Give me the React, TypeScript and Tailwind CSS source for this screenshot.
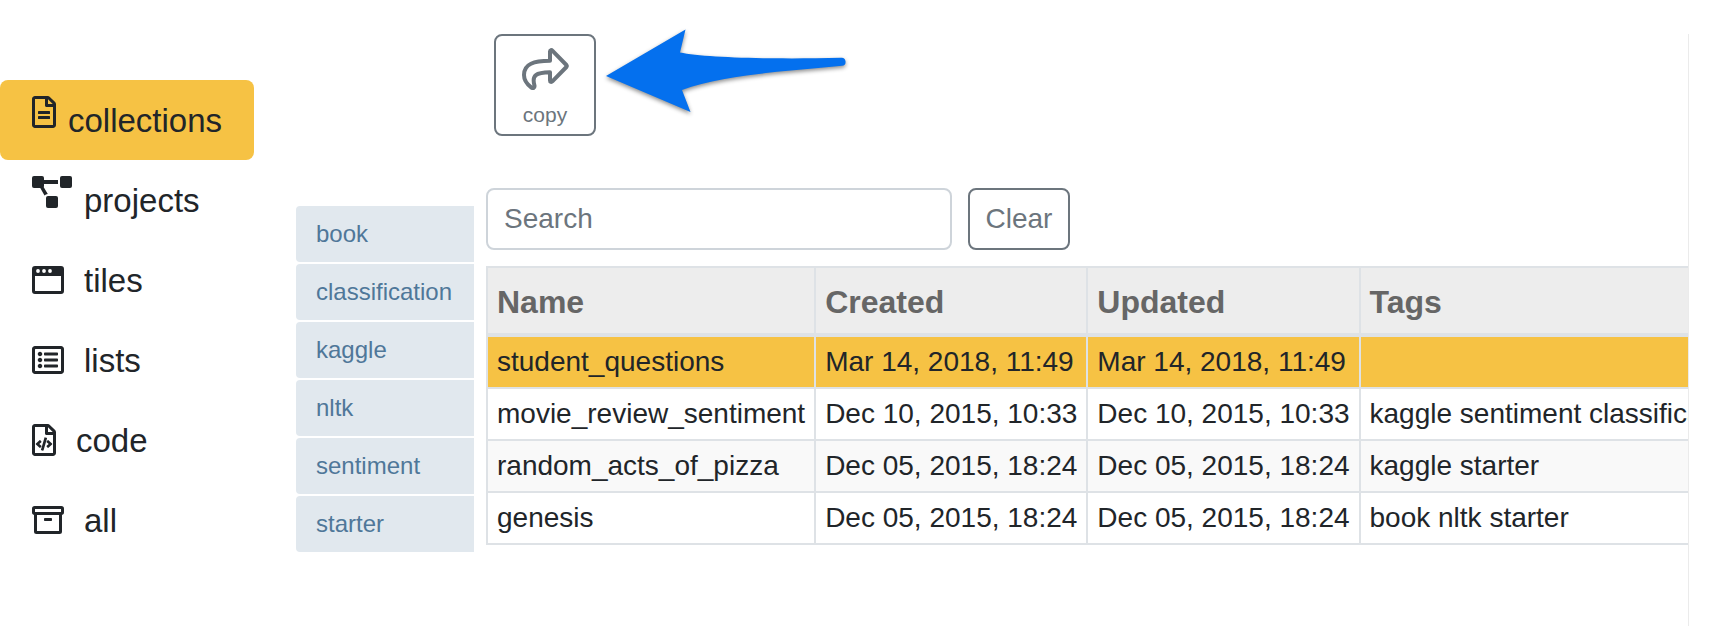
import React, { useState } from "react";
import { FaRegFileCode, FaRegListAlt } from "react-icons/fa";

function DocumentIcon() {
  return (
    <svg className="h-8 w-6" viewBox="0 0 384 512" fill="currentColor" aria-hidden="true">
      <path d="M369.9 97.9L286 14C277 5 264.8 0 252.1 0H48C21.5 0 0 21.5 0 48v416c0 26.5 21.5 48 48 48h288c26.5 0 48-21.5 48-48V131.9c0-12.7-5.1-25-14.1-34zM332.1 128H256V51.9l76.1 76.1zM48 464V48h160v104c0 13.3 10.7 24 24 24h104v288H48z" />
      <rect x="96" y="240" width="192" height="48" rx="10" />
      <rect x="96" y="320" width="192" height="48" rx="10" />
    </svg>
  );
}

function DiagramIcon() {
  return (
    <svg className="h-8 w-10" viewBox="0 0 40 32" fill="currentColor" aria-hidden="true">
      <rect x="0" y="0" width="12" height="12" rx="2" />
      <rect x="28" y="0" width="12" height="12" rx="2" />
      <rect x="14" y="20" width="12" height="12" rx="2" />
      <path d="M11 4H26V8H11zM8 11.5L11 10L15.8 18C14.4 18.2 13.3 18.8 12.5 19.6z" />
    </svg>
  );
}

function WindowIcon() {
  return (
    <svg className="h-8 w-8" viewBox="0 0 32 32" fill="currentColor" aria-hidden="true">
      <path
        fillRule="evenodd"
        d="M3 2H29A3 3 0 0 1 32 5V27A3 3 0 0 1 29 30H3A3 3 0 0 1 0 27V5A3 3 0 0 1 3 2zM3 12V26.4Q3 27 3.6 27H28.4Q29 27 29 26.4V12zM6 5.1a1.9 1.9 0 1 0 0 3.8a1.9 1.9 0 1 0 0-3.8zM12 5.1a1.9 1.9 0 1 0 0 3.8a1.9 1.9 0 1 0 0-3.8zM18 5.1a1.9 1.9 0 1 0 0 3.8a1.9 1.9 0 1 0 0-3.8z"
      />
    </svg>
  );
}

function ArchiveIcon() {
  return (
    <svg className="h-8 w-8" viewBox="0 0 32 32" fill="none" stroke="currentColor" strokeWidth="3" aria-hidden="true">
      <rect x="1.5" y="3.5" width="29" height="6" rx="1.2" />
      <path d="M3.5 9.5V27.5Q3.5 28.5 4.5 28.5H27.5Q28.5 28.5 28.5 27.5V9.5" />
      <rect x="12" y="14" width="8" height="3" rx="0.8" fill="currentColor" stroke="none" />
    </svg>
  );
}

function ShareIcon() {
  return (
    <svg
      className="h-[42px] w-12"
      viewBox="-1 0 48 42"
      fill="none"
      stroke="currentColor"
      strokeWidth="4"
      strokeLinejoin="round"
      aria-hidden="true"
    >
      <path d="M28 12.8V3.6C28 1.8 29.4 1.6 30.6 2.8L44.4 17Q45.2 18 44.4 19L30.6 33.2C29.4 34.4 28 34.2 28 32.4V24.3C14 24.6 9.6 27 12.4 37.2C13 39.6 11 40.8 9.2 39.4C5 36.2 2 32.4 2 27C2 15.6 12 13 28 12.8Z" />
    </svg>
  );
}

function PointerArrow() {
  return (
    <svg className="h-[100px] w-[250px] drop-shadow-[0_2px_2px_rgba(0,0,0,0.45)]" viewBox="0 0 250 100" aria-hidden="true">
      <path
        d="M7 56L86.5 9.5L81 32.5C105 37.5 170 39.5 242 37.8A4 4 0 0 1 243 45.8C190 51 125 54.5 83 70L91.5 92Z"
        fill="#0470ee"
      />
    </svg>
  );
}

const sections = [
  { label: "collections", icon: <DocumentIcon />, raised: true },
  { label: "projects", icon: <DiagramIcon />, raised: true },
  { label: "tiles", icon: <WindowIcon />, raised: false },
  { label: "lists", icon: <FaRegListAlt className="h-8 w-8" />, raised: false },
  { label: "code", icon: <FaRegFileCode className="h-8 w-6" />, raised: false },
  { label: "all", icon: <ArchiveIcon />, raised: false },
];

const tags = ["book", "classification", "kaggle", "nltk", "sentiment", "starter"];

const columns = ["Name", "Created", "Updated", "Tags"];

const rows = [
  ["student_questions", "Mar 14, 2018, 11:49", "Mar 14, 2018, 11:49", ""],
  ["movie_review_sentiment", "Dec 10, 2015, 10:33", "Dec 10, 2015, 10:33", "kaggle sentiment classification"],
  ["random_acts_of_pizza", "Dec 05, 2015, 18:24", "Dec 05, 2015, 18:24", "kaggle starter"],
  ["genesis", "Dec 05, 2015, 18:24", "Dec 05, 2015, 18:24", "book nltk starter"],
];

export default function App() {
  const [section, setSection] = useState("collections");
  const [selected, setSelected] = useState(0);
  const [query, setQuery] = useState("");

  return (
    <div className="flex min-h-screen bg-white pr-[23px] font-['Liberation_Sans',Arial,sans-serif] text-[#212529]">
      <nav className="flex w-[254px] shrink-0 flex-col pt-20">
        {sections.map((s) => (
          <button
            key={s.label}
            type="button"
            onClick={() => setSection(s.label)}
            className={`flex h-20 items-start rounded-lg px-8 pt-4 text-[33px] leading-[50px] ${
              s.raised ? "gap-3" : "gap-5"
            } ${section === s.label ? "bg-[#f6c244]" : ""}`}
          >
            <span className={s.raised ? "shrink-0" : "mt-2 shrink-0"}>{s.icon}</span>
            {s.label}
          </button>
        ))}
      </nav>

      <aside className="ml-[42px] flex w-[178px] shrink-0 flex-col gap-0.5 pt-[206px]">
        {tags.map((tag) => (
          <button
            key={tag}
            type="button"
            className="rounded-l-sm bg-[#e1e8ee] px-5 py-2.5 text-left text-2xl leading-9 text-[#4f7799]"
          >
            {tag}
          </button>
        ))}
      </aside>

      <main className="ml-3 mt-[34px] min-w-0 flex-1 overflow-hidden border-r border-[#ebebeb]">
        <div className="pl-2">
          <button
            type="button"
            className="flex size-[102px] flex-col items-center gap-3 rounded-lg border-2 border-[#6c757d] pt-3 text-[21px] leading-[26px] text-[#6c757d]"
          >
            <ShareIcon />
            copy
          </button>
        </div>

        <div className="mt-[52px] flex gap-4">
          <input
            type="text"
            aria-label="Search"
            placeholder="Search"
            value={query}
            onChange={(e) => setQuery(e.target.value)}
            className="h-[62px] w-[466px] rounded-lg border-2 border-[#ced4da] px-4 text-[28px] placeholder:text-[#6c757d]"
          />
          <button
            type="button"
            onClick={() => setQuery("")}
            className="h-[62px] w-[102px] rounded-lg border-2 border-[#6c757d] text-[28px] text-[#6c757d]"
          >
            Clear
          </button>
        </div>

        <table className="mt-4 w-max min-w-full border-collapse whitespace-nowrap text-left">
          <thead>
            <tr className="bg-[#ededed]">
              {columns.map((c) => (
                <th
                  key={c}
                  className="border-2 border-b-4 border-[#dee2e6] px-[9px] pt-2.5 pb-[7px] text-[32px] leading-[48px] font-bold text-[#666]"
                >
                  {c}
                </th>
              ))}
            </tr>
          </thead>
          <tbody>
            {rows
              .map((cells, index) => ({ cells, index }))
              .filter(({ cells }) => cells.join(" ").includes(query))
              .map(({ cells, index }) => (
                <tr
                  key={cells[0]}
                  onClick={() => setSelected(index)}
                  className={index === selected ? "bg-[#f6c244]" : index % 2 === 0 ? "bg-[#f9f9f9]" : "bg-white"}
                >
                  {cells.map((cell, i) => (
                    <td
                      key={columns[i]}
                      className="border-2 border-[#dee2e6] px-[9px] py-1 text-[28px] leading-[42px]"
                    >
                      {cell}
                    </td>
                  ))}
                </tr>
              ))}
          </tbody>
        </table>
      </main>

      <div className="pointer-events-none absolute top-5 left-[599px]">
        <PointerArrow />
      </div>
    </div>
  );
}
